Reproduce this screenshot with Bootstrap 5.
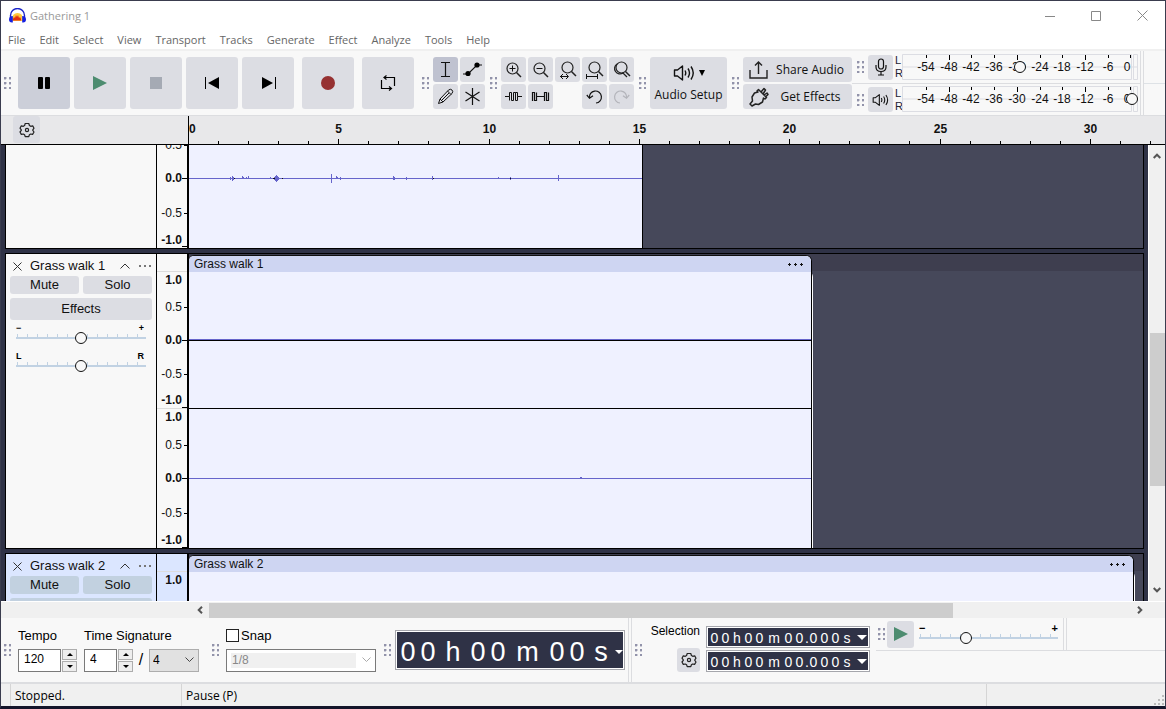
<!DOCTYPE html>
<html lang="en">
<head>
<meta charset="utf-8">
<meta name="viewport" content="width=device-width, initial-scale=1">
<title>Gathering 1</title>
<link href="https://cdn.jsdelivr.net/npm/bootstrap@5.3.0/dist/css/bootstrap.min.css" rel="stylesheet">
<style>
:root{--ui:"Open Sans","Noto Sans",sans-serif;--sans:"Liberation Sans",Arial,sans-serif;--btn:#dcdde3;--line:#dcdde0;--dark:#2f3246}
body{font:12px/16px var(--ui);color:#000;background:#12132a;height:100vh;overflow:hidden}
.app{height:100%;border:1px solid #3a3c4e;border-bottom:3px solid #14152a;background:#f8f8f8}
svg{display:block;flex:none}
button,input,select{font:inherit;color:inherit}
.tb{background:var(--btn);border:0;border-radius:3px;padding:0;display:flex;align-items:center;justify-content:center;flex:none;color:#111}
.tb.pressed{background:#cccfd9}.tb.chosen{background:#bfc2d0}
.big{width:52px;height:52px}.sm{width:25px;height:25px}
.grip{width:7px;height:12px;margin:0 4px 0 5px;flex:none;background:radial-gradient(circle at 1px 1px,#9293aa 0 1px,transparent 2px) 0 0/5px 5px}
.grip.lead-in{margin:0 7px 0 3px}
.titlebar{height:29px;background:#fff;color:#999;padding-left:8px;font-size:11px}
.winbtn{width:46px;height:29px;border:0;background:none;padding:0;display:flex;align-items:center;justify-content:center}
.menubar{height:21px;background:#fff;border-bottom:2px solid #f0f0f0;padding-left:7px;gap:14px;font-size:11px}
.menubar a{color:#666;text-decoration:none}
.tools{height:65px;flex:none;border-bottom:1px solid var(--line)}
.zoomgrid{display:grid;grid-template-columns:repeat(5,25px);gap:2px}
.toolgrid{display:grid;grid-template-columns:repeat(2,25px);gap:2px}
.setup{width:77px;height:52px;gap:5px}
.stack{gap:2px}
.wide{width:109px;height:25px;justify-content:flex-start;padding-left:6px}
.wide span{flex:1;text-align:center}
.meter{height:32px}
.meter+.meter{border-top:1px solid var(--line);height:32px}
.lr{width:9px;font:11px/13px var(--sans);padding-left:2px;color:#223}
.timeline{height:29px;flex:none;background:#e8e8ea;border-bottom:1px solid #000}
.timeline .corner{width:187px;padding-left:12px}
.timeline .corner .tb{width:27px;height:27px}
svg text{font-family:var(--sans);font-size:12px;fill:#111}
.b{font-weight:bold}
.stage{background:var(--dark);min-height:0;flex:1 1 0}
.tracks{padding:0 4px;gap:4px;min-width:0;overflow:hidden}
.track{border:1px solid #000;flex:none;overflow:hidden}
.track.first{border-top:0;height:104px}.track.mid{height:296px}.track.last{height:60px}
.panel{width:151px;border-right:1px solid #000;background:#f8f8f8;padding:4px;font:13px/16px var(--sans)}
.selected .panel,.selected .vrule{background:#dbe6ff}
.selected .tb{background:#c2d1e0}
.plain{border:0;background:none;padding:0;display:flex}
.panel .head{height:16px;margin-bottom:2px;color:#111;padding-left:3px}
.panel .half{height:18px;flex:1}.panel .full{height:22px;width:100%}
.vrule{width:32px;border-right:2px solid #000;background:#f8f8f8;flex:none}
.wave{background:#46485a;min-width:0;overflow:hidden}
.mid .wave,.last .wave{background:linear-gradient(#3e3e4f 17px,#46485a 17px)}
.clip{background:#eff1ff;border-right:1px solid #000;height:100%}
.mid .clip,.last .clip{margin-top:1px;border-top:1px solid #111;border-radius:5px 6px 0 0;box-shadow:1px 16px #fff}
.cliphead{background:#ced5f2;height:16px;font:12px/16px var(--sans);padding:0 7px 0 5px;color:#111;border-radius:5px 5px 0 0}
.slide{font:bold 9px/9px var(--sans);padding:0 6px}
.slide .caps{padding:0 2px 0 0}
.slide.gain{margin:4px 0 8px}
.slide input,.speed input{display:block;appearance:none;-webkit-appearance:none;width:100%;height:13px;margin:-2px 0 0;
 background:linear-gradient(#c1d2e3,#c1d2e3) 0 6px/100% 2px no-repeat,repeating-linear-gradient(90deg,transparent 0 1px,#c1d2e3 1px 2px,transparent 2px 10px) 0 3px/100% 3px no-repeat}
input[type=range]::-webkit-slider-thumb{-webkit-appearance:none;width:12px;height:12px;border:1px solid #111;border-radius:50%;background:#f8f8f8}
.vscroll{width:17px;background:#f0f0f0;border-left:1px solid #fff}
.vscroll .thumb{background:#cdcdcd;width:15px;height:153px;margin-bottom:101px}
.flip{transform:rotate(180deg)}
.hscroll{height:17px;flex:none;background:#f0f0f0;border-top:1px solid #fff;padding:0 21px 0 195px}
.hscroll .thumb{background:#cdcdcd;width:744px;height:15px;margin-left:5px}
.bottom{height:66px;flex:none;border-bottom:2px solid var(--line);font:12px/14px var(--sans)}
.bottom label,.lbl{font:12px/14px var(--sans)}
.bottom label{font-size:13px}
.tempo-col{width:66px}.sig-col{width:115px}
.gap-label{margin-bottom:6px}
.field{height:23px;border:1px solid #7a7a7a;background:#fff;padding:0 0 2px 5px;border-radius:0}
.w-tempo{width:43px}.w-beats{width:33px}.w-unit{width:50px}
.spin{width:15px;gap:1px;margin-left:1px}
.spin button{height:11px;border:1px solid #adadad;background:#eee;padding:0;display:flex;align-items:center;justify-content:center}
.pick{display:block;appearance:none;height:23px;border:1px solid #adadad;border-radius:0;padding:0 0 0 3px;background:#e1e1e1 url("data:image/svg+xml,%3Csvg xmlns='http://www.w3.org/2000/svg' width='9' height='6'%3E%3Cpath d='M.5.5l4 4 4-4' fill='none' stroke='%23444'/%3E%3C/svg%3E") right 4px center no-repeat}
.snapbox{width:150px;border-color:#7a7a7a;background-color:#fff;color:#888;opacity:1;padding-left:5px;background-image:url("data:image/svg+xml,%3Csvg xmlns='http://www.w3.org/2000/svg' width='9' height='6'%3E%3Cpath d='M.5.5l4 4 4-4' fill='none' stroke='%23aaa'/%3E%3C/svg%3E"),linear-gradient(#f0f0f0,#f0f0f0);background-position:right 4px center,4px 3px;background-size:auto,125px 15px}
.snap-grip{margin:0 7px 0 13px}.pos-grip{margin-left:8px}
.tick{appearance:none;width:13px;height:13px;border:1px solid #222;background:#fff;margin:0 2px 0 0;border-radius:0}
.time{background:var(--dark);border:1px solid #a5a6ac;box-shadow:inset 0 0 0 1px #fff;color:#fff;display:flex;align-items:center;padding:0}
.time span{display:block;text-align:center;flex:none}
.time.main{width:230px;height:40px;font:27px/38px var(--sans);padding:3px 0 0 2px}
.time.main span{width:20px}.time.main .u{width:30px}.time.main .m{width:39px}.time.main .end{width:28px}
.time.sel{width:164px;height:22px;font:14px/20px var(--sans);padding:1px 0 0 2px}
.time.sel span{width:11px}.time.sel .u{width:12px}.time.sel .m{width:18px}.time.sel .d{width:3px}
.bar2{width:4px;border-left:1px solid var(--line);border-right:1px solid var(--line);align-self:stretch}
.bottom>.bar2,.bottom>.bar2+.grip{margin:0 0 0 3px}
.selcol{width:58px;height:48px;margin:6px 6px 0 0}
.cog{width:23px;height:24px}
.side{border-bottom:1px solid var(--line);height:33px}
.side .grip{margin:0 2px}
.side .tb{width:27px;height:27px}
.sidewrap{margin-left:6px}
.speed{width:139px;margin:0 5px;font:bold 11px/9px var(--sans)}
.status{height:22px;flex:none;background:#f0f0f0;line-height:24px}
.status div{border-left:1px solid #d5d5d5;padding-left:4px}
.s0{margin-left:9px;width:171px}.s2{width:179px}
</style>
</head>
<body>
<svg width="0" height="0" class="position-absolute" aria-hidden="true">
<defs>
<symbol id="gear" viewBox="0 0 16 16"><g fill="none" stroke="#222" stroke-width="1.2" stroke-linejoin="round"><path d="M6.200 1.500h3.600l.6 2 1.300.8 2-.5 1.300 2.400-1.200 1.600v.6l1.200 1.600-1.400 2.400-2-.4-1.200.7-.6 1.900H6.200l-.6-1.900-1.300-.7-2 .4L1 10l1.300-1.600v-.6L1 6.200l1.300-2.400 2 .5 1.300-.8z"/><circle cx="8" cy="8" r="1.600"/></g></symbol>
<symbol id="play" viewBox="0 0 14 14"><path d="M0 0v14l14-7z" fill="#4d8c70"/></symbol>
<symbol id="spk" viewBox="0 0 22 18"><g fill="none" stroke="#111" stroke-width="1.400"><path d="M1.500 6h3l5-4v14l-5-4h-3z" stroke-linejoin="round"/><path d="M12 6.500q1.500 2.500 0 5M15 4.500q3 4.500 0 9M18 2.500q4.500 6.500 0 13"/></g></symbol>
<symbol id="mag" viewBox="0 0 25 25"><g fill="none" stroke="#222" stroke-width="1.200"><circle cx="11.500" cy="11.500" r="5.500"/><path d="M15.500 15.500l4.500 4.500" stroke-width="1.500"/></g></symbol>
<symbol id="x" viewBox="0 0 9 9"><path d="M.5.5l8 8M8.500.5l-8 8" stroke="#333" fill="none"/></symbol>
<symbol id="caret" viewBox="0 0 10 6"><path d="M.5 5.500L5 1l4.500 4.500" stroke="#333" fill="none"/></symbol>
<symbol id="sc" viewBox="0 0 8 6"><path d="M.7 5L4 1.700 7.300 5" stroke="#555" stroke-width="2" fill="none"/></symbol>
<symbol id="more" viewBox="0 0 14 4"><path d="M1 2h2M6 2h2M11 2h2" stroke="#777" stroke-width="2"/></symbol>
<symbol id="more2" viewBox="0 0 16 3"><path d="M0 1.500h3M6 1.500h3M12 1.500h3M1.500 0v3M7.500 0v3M13.500 0v3" stroke="#111"/></symbol>
<symbol id="down" viewBox="0 0 10 5"><path d="M0 0h10L5 5z" fill="currentColor"/></symbol>
</defs></svg>

<div class="app d-flex flex-column">
<header class="flex-shrink-0">
 <div class="titlebar d-flex align-items-center">
  <svg width="17" height="16" viewBox="0 0 17 16"><path d="M3 12q0-7 5.500-7T14 12v1H3z" fill="#ffc83a"/><path d="M4 11l1-2 1 1 1-3 1 2 1-2 1 3 1-1 1 2v1.500H4z" fill="#e33010"/><path d="M1.500 10V7.500a6.500 6.500 0 0 1 14 0V10" fill="none" stroke="#1a24c9" stroke-width="1.400"/><path d="M3.800 8v6.500Q0 15 0 11.500T3.800 8zM13.200 8v6.500q3.800.5 3.800-3T13.200 8z" fill="#1720e0"/></svg>
  <span class="ms-1 flex-grow-1">Gathering 1</span>
  <button class="winbtn" aria-label="Minimize"><svg width="10" height="10"><path d="M0 5.500h10" stroke="#888"/></svg></button>
  <button class="winbtn" aria-label="Maximize"><svg width="10" height="10"><path d="M.5.5h9v9h-9z" fill="none" stroke="#888"/></svg></button>
  <button class="winbtn" aria-label="Close"><svg width="11" height="11"><path d="M.5.5l10 10M10.500.5l-10 10" stroke="#888"/></svg></button>
 </div>
 <nav class="menubar d-flex align-items-center"><a href="#">File</a><a href="#">Edit</a><a href="#">Select</a><a href="#">View</a><a href="#">Transport</a><a href="#">Tracks</a><a href="#">Generate</a><a href="#">Effect</a><a href="#">Analyze</a><a href="#">Tools</a><a href="#">Help</a></nav>
</header>

<section class="tools d-flex align-items-center">
 <div class="grip lead-in"></div>
 <div class="d-flex gap-1">
  <button class="tb big pressed" aria-label="Pause"><svg width="12" height="12"><rect width="5" height="12" rx="1"/><rect x="7" width="5" height="12" rx="1"/></svg></button>
  <button class="tb big" aria-label="Play"><svg width="14" height="14"><use href="#play"/></svg></button>
  <button class="tb big" aria-label="Stop"><svg width="12" height="12"><rect width="12" height="12" fill="#a5aab4"/></svg></button>
  <button class="tb big" aria-label="Skip to Start"><svg width="15" height="12"><path d="M.5 0v12" stroke="#000"/><path d="M14 0v12L3 6z"/></svg></button>
  <button class="tb big" aria-label="Skip to End"><svg width="15" height="12"><path d="M14.500 0v12" stroke="#000"/><path d="M1 0v12l11-6z"/></svg></button>
  <button class="tb big ms-1" aria-label="Record"><svg width="14" height="14"><circle cx="7" cy="7" r="7" fill="#963132"/></svg></button>
  <button class="tb big ms-1" aria-label="Loop"><svg width="16" height="16" viewBox="0 0 16 16" fill="none" stroke="#000" stroke-width="1.200"><path d="M1.500 5v8.500H11M4.500 2.500h10V11M6.500.5l-2.500 2 2.500 2M9 11.500l2.500 2-2.500 2"/></svg></button>
 </div>
 <div class="grip pos-grip"></div>
 <div class="toolgrid">
  <button class="tb sm chosen" aria-label="Selection Tool"><svg width="11" height="17" viewBox="0 0 11 17"><path d="M1 1.500h9M5.500 1.500v14M1 15.500h9" fill="none" stroke="#111" stroke-width="1.200"/></svg></button>
  <button class="tb sm" aria-label="Envelope Tool"><svg width="21" height="15" viewBox="0 0 21 15"><path d="M1 12h5l9-9h5" fill="none" stroke="#111" stroke-width="1.200"/><circle cx="6" cy="11.500" r="2.600"/><circle cx="15" cy="3" r="2.600"/></svg></button>
  <button class="tb sm" aria-label="Draw Tool"><svg width="17" height="17" viewBox="0 0 17 17"><path d="M1.500 15.500L3 11l8.500-9q2-1.500 3.500 0t0 3.500L6 14zM3 11l3 3M10.500 3l3.500 3.500M5 12l7-7" fill="none" stroke="#111"/></svg></button>
  <button class="tb sm" aria-label="Multi-Tool"><svg width="17" height="17" viewBox="0 0 17 17"><path d="M8.500 0v17M1.500 4l14 9M15.500 4l-14 9" stroke="#111" stroke-width="1.200"/></svg></button>
 </div>
 <div class="grip"></div>
 <div class="zoomgrid">
  <button class="tb sm" aria-label="Zoom In"><svg width="25" height="25"><use href="#mag"/><path d="M8.500 11.500h6M11.500 8.500v6" stroke="#111"/></svg></button>
  <button class="tb sm" aria-label="Zoom Out"><svg width="25" height="25"><use href="#mag"/><path d="M8.500 11.500h6" stroke="#111"/></svg></button>
  <button class="tb sm" aria-label="Fit Selection to Width"><svg width="25" height="25"><use href="#mag" x="1" y="-1"/><path d="M5 19.500h8M8 17l-2.500 2.500L8 22M11 17l2.500 2.500L11 22" stroke="#111" fill="none"/></svg></button>
  <button class="tb sm" aria-label="Fit Project to Width"><svg width="25" height="25"><use href="#mag" x="1" y="-1"/><path d="M5 19.500h10M4.500 17v5M15.500 17v5" stroke="#111"/></svg></button>
  <button class="tb sm" aria-label="Zoom Toggle"><svg width="25" height="25"><use href="#mag" x="1" y="-1"/><path d="M8 7a5 5 0 1 0 6 9l4 4" fill="none" stroke="#222" stroke-width="1.300"/></svg></button>
  <button class="tb sm" aria-label="Trim Audio"><svg width="17" height="11" viewBox="0 0 17 11"><path d="M0 5.500h4.500v-4h2v8h2v-8h2v8h2v-4H17M4.500 5.500v4M12.500 5.500v-4h-2" fill="none" stroke="#111"/></svg></button>
  <button class="tb sm" aria-label="Silence Audio"><svg width="19" height="11" viewBox="0 0 19 11"><path d="M1.500 10V1.500h2v8h2v-8M5.500 5.500h8M13.500 10V1.500h2v8h2v-8" fill="none" stroke="#111" stroke-width="1.200"/></svg></button>
  <span></span>
  <button class="tb sm" aria-label="Undo"><svg width="17" height="15" viewBox="0 0 17 15"><path d="M3.500 9A6 6 0 1 1 10 14M.8 6l2.700 3.300L7 6.700" fill="none" stroke="#111" stroke-width="1.200"/></svg></button>
  <button class="tb sm" aria-label="Redo" disabled><svg width="17" height="15" viewBox="0 0 17 15"><path d="M13.500 9A6 6 0 1 0 7 14M16.200 6l-2.700 3.300L10 6.700" fill="none" stroke="#b3b4ba" stroke-width="1.200"/></svg></button>
 </div>
 <div class="grip"></div>
 <button class="tb setup flex-column"><span class="d-flex align-items-center gap-1"><svg width="22" height="18"><use href="#spk"/></svg><svg width="6" height="6" viewBox="0 0 10 10"><path d="M0 0h10L5 10z"/></svg></span><span>Audio Setup</span></button>
 <div class="grip"></div>
 <div class="stack d-flex flex-column">
  <button class="tb wide"><svg width="19" height="18" viewBox="0 0 19 18"><path d="M1 9v8h17V9M9.500 13V1.500M6 4.500l3.500-3.500L13 4.500" fill="none" stroke="#222" stroke-width="1.400"/></svg><span>Share Audio</span></button>
  <button class="tb wide"><svg width="20" height="20" viewBox="0 0 20 20"><g fill="none" stroke="#222" stroke-width="1.500" stroke-linejoin="round"><path d="M8 4l1.500-1.500 8 8L16 12l-1.500-1-1 4-4 2.500-3-.5L3 19l-2-2 2.500-3L3 10l2.500-4L9 5zM12 5l3-3.500 1.500 1.500-2.500 4M15 8l3-2 1 1.500-2.500 2.500"/></g></svg><span>Get Effects</span></button>
 </div>
 <div class="flex-grow-1 align-self-stretch d-flex">
  <div>
   <div class="meter d-flex align-items-center"><div class="grip"></div><button class="tb sm" aria-label="Record Meter"><svg width="12" height="18" viewBox="0 0 12 18" fill="none" stroke="#111" stroke-width="1.200"><rect x="3.500" y="1" width="5" height="10" rx="2.500"/><path d="M1 7v2q0 4.500 5 4.500T11 9V7M6 13.500V17M3 17h6"/></svg></button><div class="lr">L<br>R</div><svg class="meterface" data-level="118" width="238" height="27"></svg></div>
   <div class="meter d-flex align-items-center"><div class="grip"></div><button class="tb sm" aria-label="Playback Meter"><svg width="17" height="14"><use href="#spk"/></svg></button><div class="lr">L<br>R</div><svg class="meterface" data-level="230" width="238" height="27"></svg></div>
  </div>
  <div class="bar2"></div>
  <div class="flex-grow-1 d-flex align-items-center"><div class="w-100 border-top"></div></div>
 </div>
</section>

<section class="timeline d-flex">
 <div class="corner flex-shrink-0"><button class="tb" aria-label="Timeline Options"><svg width="16" height="16"><use href="#gear"/></svg></button></div>
 <div class="flex-grow-1 overflow-hidden"><svg id="ruler" width="100%" height="28"></svg></div>
</section>

<main class="stage d-flex">
 <div class="tracks flex-grow-1 d-flex flex-column">
  <div class="track first d-flex">
   <div class="panel flex-shrink-0"></div>
   <svg class="vrule" data-marks="0.5:0,0.0:33,-0.5:68,-1.0:95" data-lines="102" width="32" height="103"></svg>
   <div class="wave flex-grow-1"><div class="clip" style="width:454px"><svg width="453" height="103"><path d="M0 33.500h453" stroke="#6665cb"/><path d="M43.500 31v5M41.500 32v3M44.500 32v3M53.500 31v3M54.500 32v2M57.500 32v2M59.500 31v3M81.500 32v2M85.500 32v3M86.500 31v5M87.500 30v7M88.500 31v5M89.500 32v3M142.500 29v9M147.500 31v3M148.500 32v2M151.500 32v3M204.500 31v4M205.500 32v3M217.500 32v3M243.500 31v4M309.500 32v2M321.500 32v3M369.500 30v6" stroke="#6665cb"/><path d="M45 33.500h1M84 33.500h2M93 33.500h1M244 33.500h1M321 33.500h1" stroke="#111"/></svg></div></div>
  </div>
  <div class="track mid d-flex">
   <div class="panel flex-shrink-0">
    <div class="head d-flex align-items-center"><button class="plain" aria-label="Close track"><svg width="9" height="9"><use href="#x"/></svg></button><span class="ms-2 flex-grow-1">Grass walk 1</span><button class="plain me-2" aria-label="Collapse"><svg width="10" height="6"><use href="#caret"/></svg></button><button class="plain" aria-label="Track menu"><svg width="14" height="4"><use href="#more"/></svg></button></div>
    <div class="d-flex gap-1 mb-1"><button class="tb half">Mute</button><button class="tb half">Solo</button></div>
    <button class="tb full">Effects</button>
    <div class="slide gain"><div class="caps d-flex justify-content-between"><span>−</span><span>+</span></div><input type="range" aria-label="Gain" value="50"></div>
    <div class="slide"><div class="caps d-flex justify-content-between"><span>L</span><span>R</span></div><input type="range" aria-label="Pan" value="50"></div>
   </div>
   <svg class="vrule" data-marks="1.0:26,0.5:53,0.0:86,-0.5:120,-1.0:146,1.0:163,0.5:191,0.0:224,-0.5:259,-1.0:286" data-seps="17,154" data-lines="154,294" width="32" height="294"></svg>
   <div class="wave flex-grow-1"><div class="clip" style="width:623px"><div class="cliphead d-flex align-items-center justify-content-between"><span>Grass walk 1</span><button class="plain" aria-label="Clip menu"><svg width="16" height="3"><use href="#more2"/></svg></button></div>
    <svg width="622" height="276"><path d="M0 67.500h622M0 206.500h622M391 205.500h2" stroke="#6665cb"/><path d="M0 68.500h622M0 136.500h622" stroke="#000"/></svg></div></div>
  </div>
  <div class="track last selected d-flex">
   <div class="panel flex-shrink-0">
    <div class="head d-flex align-items-center"><button class="plain" aria-label="Close track"><svg width="9" height="9"><use href="#x"/></svg></button><span class="ms-2 flex-grow-1">Grass walk 2</span><button class="plain me-2" aria-label="Collapse"><svg width="10" height="6"><use href="#caret"/></svg></button><button class="plain" aria-label="Track menu"><svg width="14" height="4"><use href="#more"/></svg></button></div>
    <div class="d-flex gap-1 mb-1"><button class="tb half">Mute</button><button class="tb half">Solo</button></div>
    <button class="tb full" aria-label="Effects"></button>
   </div>
   <svg class="vrule" data-marks="1.0:26" data-seps="17" width="32" height="58"></svg>
   <div class="wave flex-grow-1"><div class="clip" style="width:945px"><div class="cliphead d-flex align-items-center justify-content-between"><span>Grass walk 2</span><button class="plain" aria-label="Clip menu"><svg width="16" height="3"><use href="#more2"/></svg></button></div></div></div>
  </div>
 </div>
 <div class="vscroll flex-shrink-0 d-flex flex-column align-items-center py-1"><svg class="mt-1" width="8" height="6"><use href="#sc"/></svg><div class="flex-grow-1"></div><div class="thumb"></div><svg class="mb-1 flip" width="8" height="6"><use href="#sc"/></svg></div>
</main>
<div class="hscroll d-flex align-items-center"><svg width="8" height="8" viewBox="0 0 8 8"><path d="M6 .7L2.700 4 6 7.300" stroke="#555" stroke-width="2" fill="none"/></svg><div class="thumb"></div><div class="flex-grow-1"></div><svg width="8" height="8" viewBox="0 0 8 8"><path d="M2 .7L5.300 4 2 7.300" stroke="#555" stroke-width="2" fill="none"/></svg></div>

<section class="bottom d-flex align-items-center">
 <div class="grip lead-in"></div>
 <div class="tempo-col"><label for="tempo" class="d-block gap-label">Tempo</label><div class="d-flex"><input id="tempo" class="field w-tempo" value="120"><div class="spin d-flex flex-column"><button aria-label="Tempo up"><svg class="flip" width="6" height="3"><path d="M0 0h6L3 3z"/></svg></button><button aria-label="Tempo down"><svg width="6" height="3"><path d="M0 0h6L3 3z"/></svg></button></div></div></div>
 <div class="sig-col"><label for="upper" class="d-block gap-label">Time Signature</label><div class="d-flex align-items-center"><input id="upper" class="field w-beats" value="4"><div class="spin d-flex flex-column"><button aria-label="Beats up"><svg class="flip" width="6" height="3"><path d="M0 0h6L3 3z"/></svg></button><button aria-label="Beats down"><svg width="6" height="3"><path d="M0 0h6L3 3z"/></svg></button></div><span class="flex-grow-1 text-center fs-6">/</span><select class="pick w-unit" aria-label="Beat unit"><option>4</option></select></div></div>
 <div class="grip snap-grip"></div>
 <div><div class="d-flex align-items-center gap-label"><input type="checkbox" id="snap" class="tick"><label for="snap">Snap</label></div><select class="pick snapbox" aria-label="Snap to" disabled><option>1/8</option></select></div>
 <div class="grip pos-grip"></div>
 <button class="time main" aria-label="Audio Position"><span>0</span><span>0</span><span class="u">h</span><span>0</span><span>0</span><span class="m">m</span><span>0</span><span>0</span><span class="u end">s</span><svg width="8" height="4" viewBox="0 0 10 5"><use href="#down"/></svg></button>
 <div class="bar2"></div>
 <div class="grip"></div>
 <div class="selcol d-flex flex-column align-items-end justify-content-between align-self-start"><span class="lbl">Selection</span><button class="tb cog" aria-label="Selection options"><svg width="16" height="16"><use href="#gear"/></svg></button></div>
 <div class="stack d-flex flex-column align-self-start pt-1 mt-1">
  <button class="time sel" aria-label="Selection start"><span>0</span><span>0</span><span class="u">h</span><span>0</span><span>0</span><span class="m">m</span><span>0</span><span>0</span><span class="d">.</span><span>0</span><span>0</span><span>0</span><span class="u">s</span><svg class="ms-1" width="10" height="5"><use href="#down"/></svg></button>
  <button class="time sel" aria-label="Selection end"><span>0</span><span>0</span><span class="u">h</span><span>0</span><span>0</span><span class="m">m</span><span>0</span><span>0</span><span class="d">.</span><span>0</span><span>0</span><span>0</span><span class="u">s</span><svg class="ms-1" width="10" height="5"><use href="#down"/></svg></button>
 </div>
 <div class="sidewrap flex-grow-1 align-self-stretch"><div class="side d-flex align-items-center"><div class="grip"></div><button class="tb" aria-label="Play at speed"><svg width="14" height="14"><use href="#play"/></svg></button><div class="speed"><div class="d-flex justify-content-between"><span>−</span><span>+</span></div><input type="range" aria-label="Playback speed" value="32"></div><div class="bar2"></div></div></div>
</section>
<footer class="status d-flex"><div class="s0">Stopped.</div><div class="flex-grow-1">Pause (P)</div><div class="s2 d-flex justify-content-end align-items-end"><svg width="11" height="11"><path d="M8 1h2M4 5h2M8 5h2M0 9h2M4 9h2M8 9h2" stroke="#bbb" stroke-width="2"/></svg></div></footer>
</div>

<script src="https://cdn.jsdelivr.net/npm/bootstrap@5.3.0/dist/js/bootstrap.bundle.min.js"></script>
<script>
// time ruler: one tick per second, a label every five
const PX = 30.06, ruler = document.getElementById('ruler'), span = ruler.parentNode.clientWidth;
let r = '<path d="M.5 0v28" stroke="#000"/>';
for (let s = 1; s * PX < span; s++) {
  const x = Math.round(s * PX) + .5;
  r += `<path d="M${x} ${s % 5 ? 25 : 23}V28" stroke="#000"/>`;
  if (s % 5 === 0 && x < span - 10) r += `<text class="b" x="${x}" y="17" text-anchor="middle">${s}</text>`;
}
ruler.innerHTML = r + '<text class="b" x="1" y="17">0</text>';
// amplitude rulers
document.querySelectorAll('.vrule').forEach(v => {
  let h = '';
  (v.dataset.seps || '').split(',').filter(Boolean).forEach(y => h += `<path d="M0 ${y}.5h30" stroke="#dcdcdc"/>`);
  v.dataset.marks.split(',').forEach(m => {
    const [t, y] = m.split(':'), half = t.endsWith('.5');
    h += `<text ${half ? '' : 'class="b"'} x="25" y="${+y + 4}" text-anchor="end">${t}</text>`;
    if (!t.endsWith('1.0')) h += `<path d="M${half ? 27 : 25} ${y}.5H30" stroke="#000"/>`;
  });
  (v.dataset.lines || '').split(',').filter(Boolean).forEach(y => h += `<path d="M25 ${y - 1}.5h5" stroke="#000"/>`);
  v.innerHTML = h;
});
// level meters, in dB
document.querySelectorAll('.meterface').forEach(m => {
  let h = '<path d="M.5.5h229v25H.5zM231.500.5h4v25h-4zM0 13h235" fill="none" stroke="#dcdde3"/>';
  for (let i = 0; i < 10; i++) {
    const x = Math.round(24 + i * 22.700);
    h += `<path d="M${x}.5 1v${i % 3 == 1 ? 5 : 3}" stroke="#000"/><text x="${i == 9 ? x - 3 : x}" y="17" text-anchor="middle">${i == 9 ? 0 : i * 6 - 54}</text>`;
  }
  m.innerHTML = h + `<circle cx="${m.dataset.level}" cy="13" r="5.500" fill="#f8f8f8" stroke="#111"/>`;
});
</script>
</body>
</html>
